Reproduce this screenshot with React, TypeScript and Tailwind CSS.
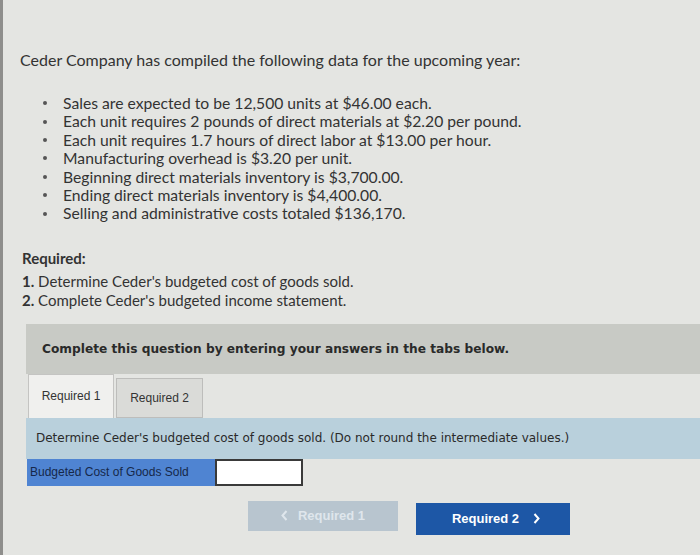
import React from "react";

const bullets = [
  "Sales are expected to be 12,500 units at $46.00 each.",
  "Each unit requires 2 pounds of direct materials at $2.20 per pound.",
  "Each unit requires 1.7 hours of direct labor at $13.00 per hour.",
  "Manufacturing overhead is $3.20 per unit.",
  "Beginning direct materials inventory is $3,700.00.",
  "Ending direct materials inventory is $4,400.00.",
  "Selling and administrative costs totaled $136,170.",
];

function Chevron({ dir, className }: { dir: "left" | "right"; className?: string }) {
  return (
    <svg width="7" height="11" viewBox="0 0 7 11" className={className}>
      <path
        d={dir === "left" ? "M5.5 1 L1.5 5.5 L5.5 10" : "M1.5 1 L5.5 5.5 L1.5 10"}
        fill="none"
        stroke="currentColor"
        strokeWidth="2"
      />
    </svg>
  );
}

export default function App() {
  return (
    <div className="w-[700px] h-[555px] overflow-hidden bg-[#e4e5e2] border-l-[3px] border-[#8e8e8c] text-[#2a2a2a] flex flex-col">
      <div className="pl-[17px] pt-[50px] text-[16px] leading-[20px] font-['Lato',sans-serif] text-[#333]">
        Ceder Company has compiled the following data for the upcoming year:
      </div>
      <ul className="mt-[24px] pl-[40px] flex flex-col font-['Lato',sans-serif] text-[15.7px] leading-[18.4px] text-[#333]">
        {bullets.map((b) => (
          <li key={b} className="flex items-center gap-[16px]">
            <span className="w-[4px] h-[4px] rounded-full bg-[#555]" />
            <span>{b}</span>
          </li>
        ))}
      </ul>
      <div className="mt-[26px] pl-[19px] font-['Lato',sans-serif] text-[15px] leading-[19px] text-[#333]">
        <div className="font-bold">Required:</div>
        <div className="mt-[4px]"><span className="font-bold">1.</span> Determine Ceder's budgeted cost of goods sold.</div>
        <div><span className="font-bold">2.</span> Complete Ceder's budgeted income statement.</div>
      </div>
      <div className="mt-[14px] ml-[23px] h-[50px] bg-[#c8cac5] flex items-center pl-[16px] font-['DejaVu_Sans',sans-serif] font-bold text-[12.2px] text-[#2a2a2a]">
        Complete this question by entering your answers in the tabs below.
      </div>
      <div className="ml-[25px] flex items-end gap-[2px]">
        <div className="w-[86px] h-[44px] bg-[#f0f0ee] border border-[#c4c4c2] border-b-0 flex items-center justify-center font-['Liberation_Sans',sans-serif] text-[12px] text-[#333]">
          Required 1
        </div>
        <div className="w-[87px] h-[40px] bg-[#dadbd8] border border-[#bdbdbb] flex items-center justify-center font-['Liberation_Sans',sans-serif] text-[12px] text-[#333]">
          Required 2
        </div>
      </div>
      <div className="ml-[23px] h-[41px] bg-[#b9d0dc] flex items-center pl-[10px] font-['DejaVu_Sans',sans-serif] text-[12px] text-[#2a2a2a]">
        Determine Ceder's budgeted cost of goods sold. (Do not round the intermediate values.)
      </div>
      <div className="ml-[24px] flex items-stretch h-[27px]">
        <div className="w-[188px] bg-[#4f84d2] flex items-center pl-[3px] font-['Liberation_Sans',sans-serif] text-[12px] text-[#16284a]">
          Budgeted Cost of Goods Sold
        </div>
        <div className="w-[88px] bg-white border-2 border-[#3a3a3a]" />
      </div>
      <div className="mt-[15px] ml-[245px] flex items-start gap-[18px] font-['Liberation_Sans',sans-serif] font-bold text-[13px]">
        <div className="w-[150px] h-[30px] bg-[#b8c5cf] text-[#dfe6ec] flex items-center justify-center gap-[10px]">
          <Chevron dir="left" />
          <span>Required 1</span>
        </div>
        <div className="mt-[2px] w-[154px] h-[32px] bg-[#1d57a6] text-white flex items-center justify-center gap-[14px] pl-[6px]">
          <span>Required 2</span>
          <Chevron dir="right" />
        </div>
      </div>
    </div>
  );
}
